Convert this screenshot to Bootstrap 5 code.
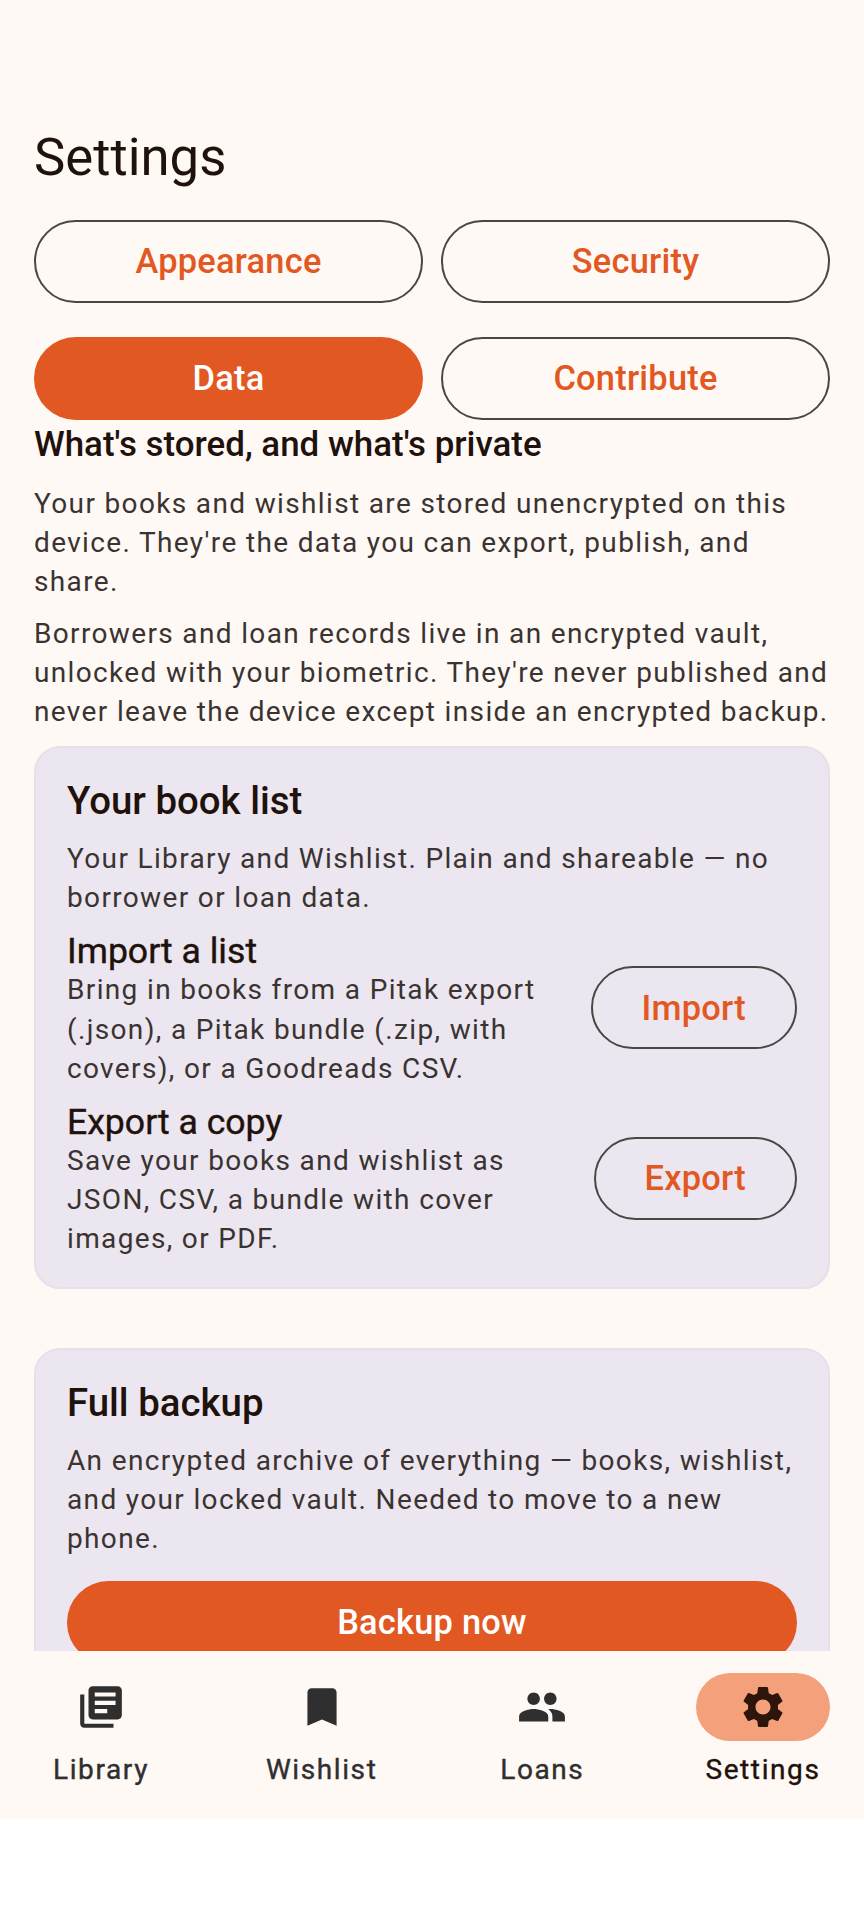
<!DOCTYPE html>
<html lang="en">
<head>
    <meta charset="UTF-8">
    <meta name="viewport" content="width=device-width, initial-scale=1.0">
    <title>Settings</title>
    <link rel="stylesheet" href="https://cdn.jsdelivr.net/npm/bootstrap@5.3.3/dist/css/bootstrap.min.css">
    <script src="https://cdn.jsdelivr.net/npm/bootstrap@5.3.3/dist/js/bootstrap.bundle.min.js"></script>
    <style>
        body{
            background-color: #fff;
            font-family: Roboto, sans-serif;
            color: #1f110b;
        }
        .app-frame{
            height: 1819px;
            background-color: #fff9f5;
        }
        .scroll-area{
            padding: 129px 34px 0;
        }
        .page-title{
            font-size: 52.7px;
            font-weight: 400;
            line-height: 56px;
            margin-bottom: 35px;
        }
        .tab-grid{
            display: grid;
            grid-template-columns: 1fr 1fr;
            column-gap: 18px;
            row-gap: 34px;
        }
        .pill-btn{
            height: 83px;
            font-size: 34.4px;
            font-weight: 500;
            letter-spacing: .24px;
            line-height: 1;
            border-radius: 42px;
            display: flex;
            align-items: center;
            justify-content: center;
            flex-shrink: 0;
        }
        .pill-outline{
            background-color: transparent;
            border: 2.4px solid #4a4644;
            color: #e25822;
            padding: 0 49px;
        }
        .pill-solid{
            background-color: #e25822;
            border: 0;
            color: #fff;
        }
        .section-head{
            font-size: 34.9px;
            font-weight: 500;
            line-height: 50px;
            margin: 0 0 14px;
        }
        .body-text{
            font-size: 28px;
            line-height: 39.2px;
            letter-spacing: 1.35px;
            color: #3a3331;
            margin: 0;
        }
        .para-gap{
            margin-top: 12.4px;
        }
        .data-card{
            background-color: #ebe6ef;
            border: 2px solid #e6e1e8;
            border-radius: 26px;
            padding: 27.4px 31px 28px;
            margin-top: 14px;
        }
        .data-card + .data-card{
            margin-top: 59px;
        }
        .card-head{
            font-size: 38.4px;
            font-weight: 500;
            line-height: 52px;
            margin: 0 0 12px;
        }
        .sub-row{
            margin-top: 15px;
            gap: 34px;
        }
        .sub-row .pill-btn{
            margin-bottom: 5px;
        }
        .sub-head{
            font-size: 35.6px;
            font-weight: 400;
            -webkit-text-stroke: .4px currentColor;
            line-height: 38px;
            margin: 0;
        }
        .wide-btn{
            margin-top: 22px;
        }
        .bottom-nav{
            height: 168px;
            padding: 22px 34px 0;
            background-color: #fff9f5;
        }
        .nav-item-box{
            width: 134px;
            color: #2f2f2f;
        }
        .icon-pill{
            width: 134px;
            height: 68px;
            border-radius: 34px;
        }
        .icon-pill svg{
            width: 50px;
            height: 50px;
            fill: currentColor;
        }
        .nav-text{
            font-size: 28px;
            font-weight: 400;
            -webkit-text-stroke: .4px currentColor;
            line-height: 40px;
            letter-spacing: 1.6px;
            margin-top: 9px;
            white-space: nowrap;
        }
        .nav-active{
            color: #1f110b;
        }
        .nav-active .icon-pill{
            background-color: #f4a07a;
            color: #2e150b;
        }
    </style>
</head>
<body>
    <div class="app-frame d-flex flex-column">
        <main class="scroll-area flex-grow-1 overflow-hidden">
            <h1 class="page-title">Settings</h1>
            <div class="tab-grid">
                <button class="pill-btn pill-outline" type="button">Appearance</button>
                <button class="pill-btn pill-outline" type="button">Security</button>
                <button class="pill-btn pill-solid" type="button">Data</button>
                <button class="pill-btn pill-outline" type="button">Contribute</button>
            </div>
            <h2 class="section-head">What's stored, and what's private</h2>
            <p class="body-text">Your books and wishlist are stored unencrypted on this device. They're the data you can export, publish, and share.</p>
            <p class="body-text para-gap">Borrowers and loan records live in an encrypted vault, unlocked with your biometric. They're never published and never leave the device except inside an encrypted backup.</p>

            <!-- book list -->
            <section class="data-card">
                <h3 class="card-head">Your book list</h3>
                <p class="body-text">Your Library and Wishlist. Plain and shareable — no borrower or loan data.</p>
                <div class="sub-row d-flex align-items-center">
                    <div class="flex-grow-1">
                        <h4 class="sub-head">Import a list</h4>
                        <p class="body-text">Bring in books from a Pitak export (.json), a Pitak bundle (.zip, with covers), or a Goodreads CSV.</p>
                    </div>
                    <button class="pill-btn pill-outline" type="button">Import</button>
                </div>
                <div class="sub-row d-flex align-items-center">
                    <div class="flex-grow-1">
                        <h4 class="sub-head">Export a copy</h4>
                        <p class="body-text">Save your books and wishlist as JSON, CSV, a bundle with cover images, or PDF.</p>
                    </div>
                    <button class="pill-btn pill-outline" type="button">Export</button>
                </div>
            </section>

            <!-- full backup, runs under the nav bar -->
            <section class="data-card">
                <h3 class="card-head">Full backup</h3>
                <p class="body-text">An encrypted archive of everything — books, wishlist, and your locked vault. Needed to move to a new phone.</p>
                <button class="pill-btn pill-solid wide-btn w-100" type="button">Backup now</button>
            </section>
        </main>

        <nav class="bottom-nav d-flex justify-content-between flex-shrink-0">
            <div class="nav-item-box d-flex flex-column align-items-center">
                <div class="icon-pill d-flex align-items-center justify-content-center">
                    <svg viewBox="0 0 24 24"><path d="M4 6H2v14c0 1.1.9 2 2 2h14v-2H4V6zm16-4H8c-1.1 0-2 .9-2 2v12c0 1.1.9 2 2 2h12c1.1 0 2-.9 2-2V4c0-1.1-.9-2-2-2zm-1 9H9V9h10v2zm-4 4H9v-2h6v2zm4-8H9V5h10v2z"/></svg>
                </div>
                <span class="nav-text">Library</span>
            </div>
            <div class="nav-item-box d-flex flex-column align-items-center">
                <div class="icon-pill d-flex align-items-center justify-content-center">
                    <svg viewBox="0 0 24 24"><path d="M17 3H7c-1.1 0-1.99.9-1.99 2L5 21l7-3 7 3V5c0-1.1-.9-2-2-2z"/></svg>
                </div>
                <span class="nav-text">Wishlist</span>
            </div>
            <div class="nav-item-box d-flex flex-column align-items-center">
                <div class="icon-pill d-flex align-items-center justify-content-center">
                    <svg viewBox="0 0 24 24"><path d="M16 11c1.66 0 2.99-1.34 2.99-3S17.66 5 16 5c-1.66 0-3 1.34-3 3s1.34 3 3 3zm-8 0c1.66 0 2.99-1.34 2.99-3S9.66 5 8 5C6.34 5 5 6.34 5 8s1.34 3 3 3zm0 2c-2.33 0-7 1.17-7 3.5V19h14v-2.5c0-2.33-4.67-3.5-7-3.5zm8 0c-.29 0-.62.02-.97.05 1.16.84 1.97 1.97 1.97 3.45V19h6v-2.5c0-2.33-4.67-3.5-7-3.5z"/></svg>
                </div>
                <span class="nav-text">Loans</span>
            </div>
            <div class="nav-item-box nav-active d-flex flex-column align-items-center">
                <div class="icon-pill d-flex align-items-center justify-content-center">
                    <svg viewBox="0 0 24 24"><path d="M19.14 12.94c.04-.3.06-.61.06-.94 0-.32-.02-.64-.07-.94l2.03-1.58c.18-.14.23-.41.12-.61l-1.92-3.32c-.12-.22-.37-.29-.59-.22l-2.39.96c-.5-.38-1.03-.7-1.62-.94l-.36-2.54c-.04-.24-.24-.41-.48-.41h-3.84c-.24 0-.43.17-.47.41l-.36 2.54c-.59.24-1.13.57-1.62.94l-2.39-.96c-.22-.08-.47 0-.59.22L2.74 8.87c-.12.21-.08.47.12.61l2.03 1.58c-.05.3-.09.63-.09.94s.02.64.07.94l-2.03 1.58c-.18.14-.23.41-.12.61l1.92 3.32c.12.22.37.29.59.22l2.39-.96c.5.38 1.03.7 1.62.94l.36 2.54c.05.24.24.41.48.41h3.84c.24 0 .44-.17.47-.41l.36-2.54c.59-.24 1.13-.56 1.62-.94l2.39.96c.22.08.47 0 .59-.22l1.92-3.32c.12-.22.07-.47-.12-.61l-2.01-1.58zM12 15.6c-1.98 0-3.6-1.62-3.6-3.6s1.62-3.6 3.6-3.6 3.6 1.62 3.6 3.6-1.62 3.6-3.6 3.6z"/></svg>
                </div>
                <span class="nav-text">Settings</span>
            </div>
        </nav>
    </div>
</body>
</html>
